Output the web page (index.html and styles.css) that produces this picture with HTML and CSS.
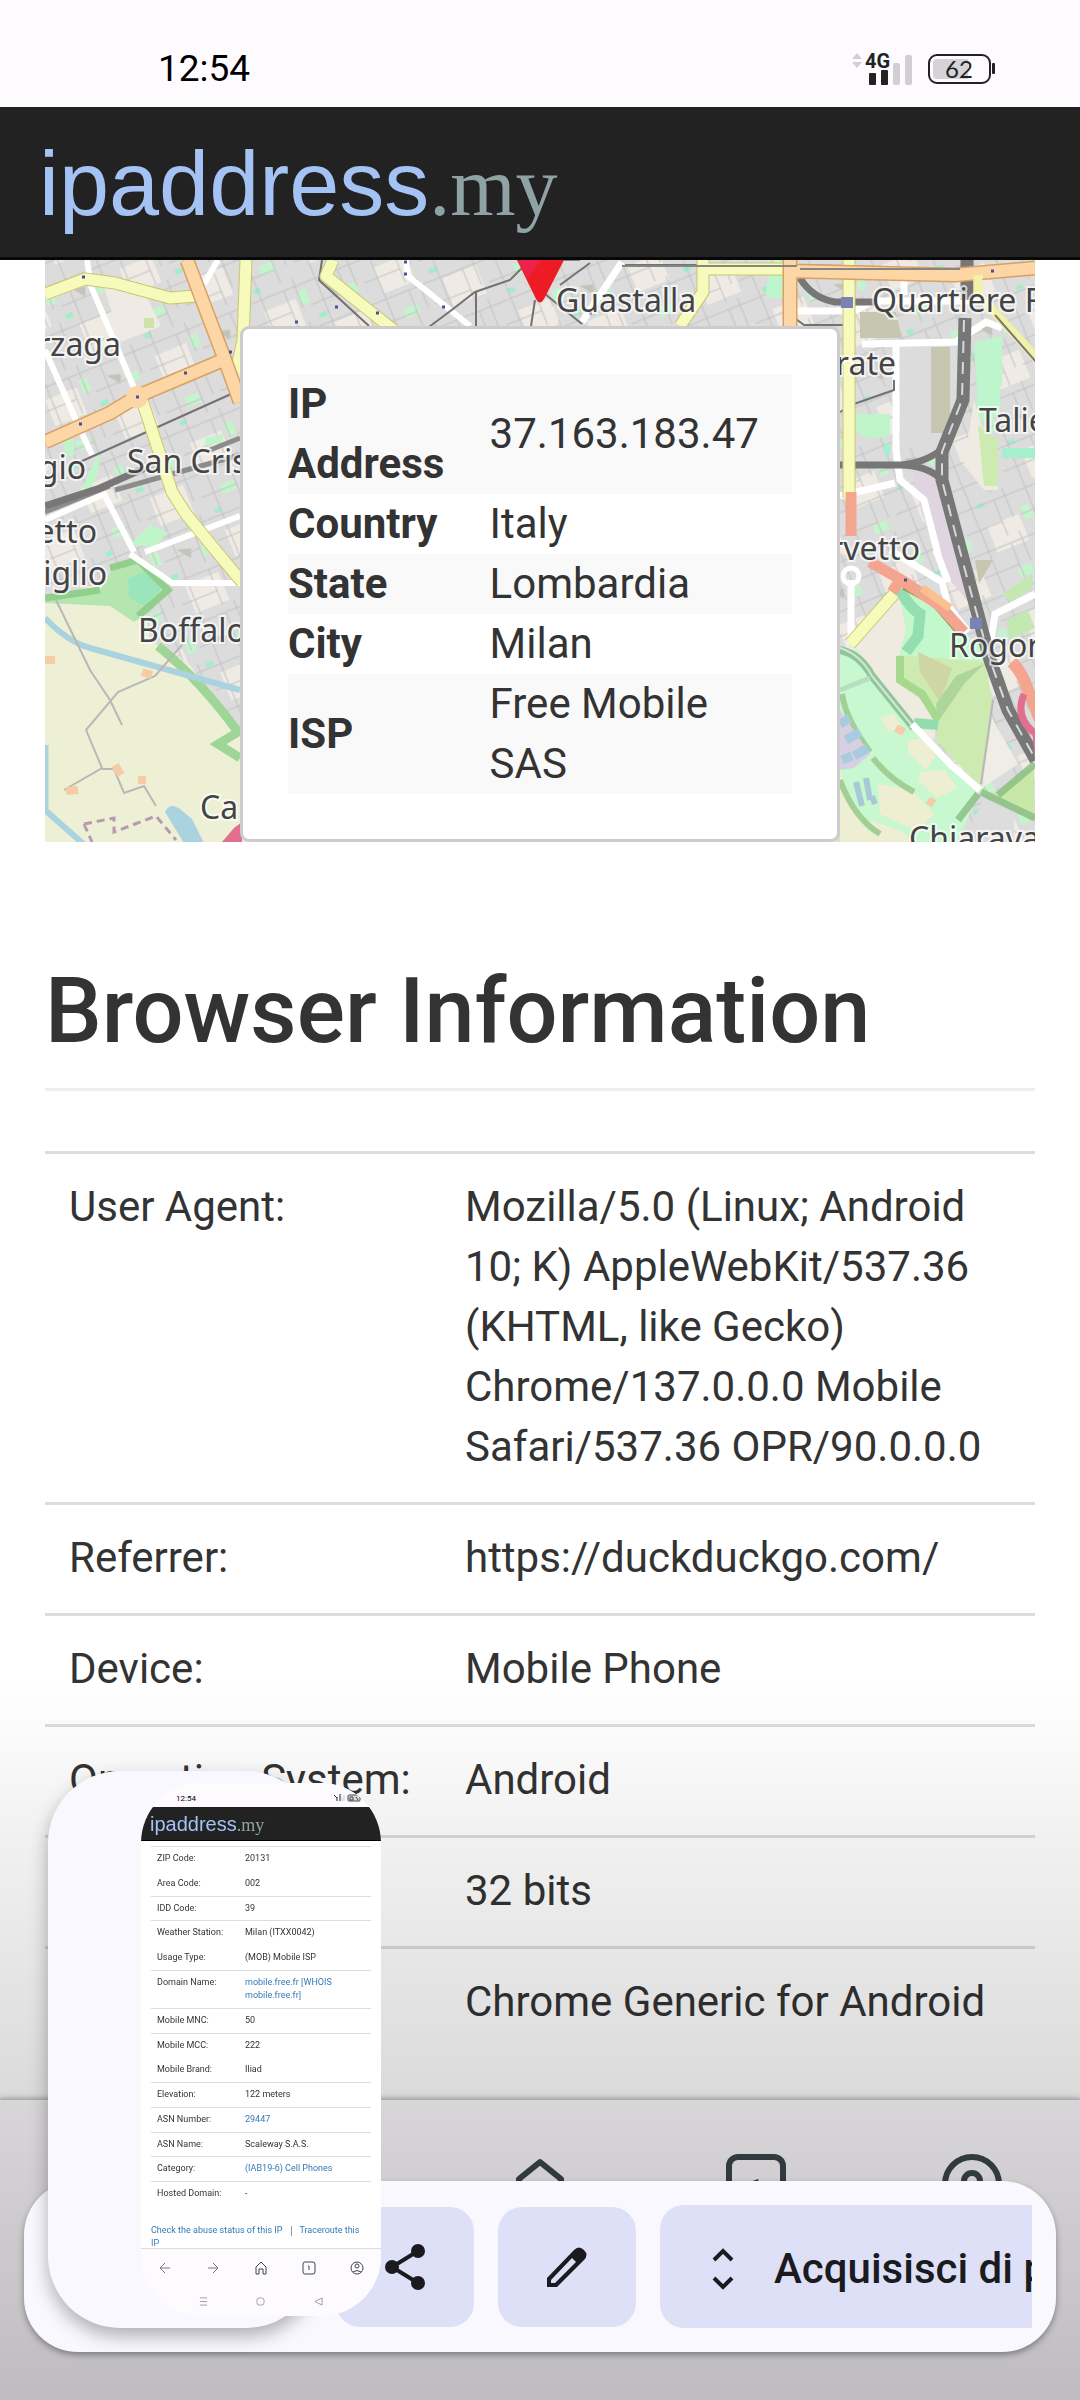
FILE: index.html
```html
<!DOCTYPE html>
<html lang="en">
<head>
    <meta charset="utf-8">
    <meta name="viewport" content="width=device-width">
    <title>ipaddress.my</title>
    <link rel="stylesheet" href="styles.css">
</head>
<body>
    <div class="status">
        <span class="clock">12:54</span>
        <svg class="signal" width="64" height="36" viewBox="850 49 64 36">
            <path d="M852 57l5-6 5 6zM852 60l5 6 5-6z" fill="#d2cfd3"/>
            <text x="865" y="66" font-size="20" font-weight="700" fill="#222">4G</text>
            <rect x="869" y="71" width="7" height="12" rx="1" fill="#222"/>
            <rect x="881" y="68" width="7" height="15" rx="1" fill="#222"/>
            <rect x="893" y="61" width="7" height="22" rx="2" fill="#d2cfd3"/>
            <rect x="905" y="53" width="7" height="30" rx="2" fill="#d2cfd3"/>
        </svg>
        <svg class="battery" width="70" height="32" viewBox="927 52 70 32">
            <rect x="929" y="54" width="61" height="28" rx="8" fill="none" stroke="#222" stroke-width="2"/>
            <path d="M937 58h31v20h-31q-4 0-4-4v-12q0-4 4-4z" fill="#d5d3d7"/>
            <rect x="992" y="62" width="3" height="11" rx="1" fill="#222"/>
            <text x="959" y="77" font-size="24" text-anchor="middle" font-family="Lato, sans-serif" fill="#222">62</text>
        </svg>
    </div>
    <header class="header">
        <a class="logo" href="#">ipaddress<span>.my</span></a>
    </header>
    <main class="container">
        <div class="map">
            <svg class="tiles" viewBox="45 260 990 582" preserveAspectRatio="xMidYMid slice">
                <defs>
                    <pattern id="streets" width="58" height="46" patternUnits="userSpaceOnUse" patternTransform="rotate(-22)">
                        <path d="M0 8H58M0 31H38M14 0V46M38 8V46M50 0V31" stroke="#c2c2c2" stroke-width="1" fill="none"/>
                    </pattern>
                    <pattern id="blocks" width="118" height="94" patternUnits="userSpaceOnUse" patternTransform="rotate(-22)">
                        <path d="M10 12h34v28h-34zM70 48h36v30h-36z" fill="#efebe4"/>
                        <path d="M48 6h9v14h-9zM22 62h15v10h-15zM98 18h8v10h-8z" fill="#c4f3cc"/>
                        <path d="M60 34h8v5h-8zM8 82h7v5h-7z" fill="#a5ecc8"/>
                        <path d="M76 12l14 4-4 9z" fill="#c4c3ba"/>
                    </pattern>
                </defs>
                <rect x="45" y="260" width="990" height="582" fill="#dcdcdc"/>
                <rect x="45" y="260" width="990" height="582" fill="url(#blocks)"/>
                <rect x="45" y="260" width="990" height="582" fill="url(#streets)"/>

                <!-- parks and fields, west -->
                <path d="M45 600L110 580 145 610 150 640 190 665 240 735V842H45z" fill="#edf0d5"/>
                <path d="M45 597L100 590 112 570 140 560 170 590 150 612 134 622 110 606 45 603z" fill="#b5e6b0"/>
                <path d="M128 578l22-8 12 18-18 18-15-8z" fill="#9be5bd"/>
                <path d="M45 598L100 590M110 568L138 560 168 590 138 616" stroke="#92cf8c" stroke-width="7" fill="none"/>
                <path d="M158 646Q200 680 238 732L218 744 240 758" stroke="#9fd597" stroke-width="9" fill="none"/>
                <path d="M103 284l18 58 40-16-20-40z" fill="#efebe4"/>
                <path d="M62 438l12 2v18l-8-4zM82 488l18-38 -2 24-8 16zM130 545l20-20 18 8-14 14zM205 438l18-4v8l-18 4z" fill="#bff5c9"/>
                <path d="M144 318h10v10h-10z" fill="#cde2a6"/>

                <!-- parks, north east -->
                <path d="M768 272h20v26h-22z" fill="#bff5cc"/>
                <path d="M860 312h36l6 26h-42z" fill="#c7c7b1"/>
                <path d="M900 345h60v55l-12 40-18 14-30-10z" fill="#dcdcdc"/>
                <path d="M931 347h19v86h-19z" fill="#c7c7b1"/>
                <path d="M856 414h34v20q-16 9-34-2z" fill="#bff5c9"/>
                <path d="M974 342l28-6v50l-24 22zM976 400l24-16v30l-20 8z" fill="#bff5cc"/>
                <path d="M974 400l10 34 14 6v50h-14l-20-25z" fill="#efebe3"/>
                <path d="M978 425l20 15v46h-14z" fill="#cdebb0"/>
                <path d="M1002 448h33v10h-33zM884 443h6v12h-6z" fill="#a5efcf"/>
                <path d="M912 470l24 4 14 40 20 90-20-24-28-66z" fill="#dfd4e0"/>

                <!-- parks, south east -->
                <path d="M840 650L858 650 900 712 980 788 958 842H840z" fill="#c7f8cf"/>
                <path d="M856 648L897 590 930 600 905 640 900 682 938 715 934 740 908 724z" fill="#efebe0"/>
                <path d="M898 588L918 590 960 630 985 650 985 668 898 660 906 630z" fill="#c2f8cb"/>
                <path d="M898 655L985 662 992 700 981 788 936 740 938 712 897 682z" fill="#cdebb0"/>
                <path d="M918 652l34 16-12 34-20-30z" fill="#d0d5a5"/>
                <path d="M984 664L964 684 938 722 936 704 956 676z" fill="#add59c"/>
                <path d="M900 656V680L922 694 938 720" stroke="#a6d98e" stroke-width="8" fill="none"/>
                <path d="M900 590q10 18 20 24l-2 22-12 16" stroke="#93dfb0" stroke-width="11" fill="none"/>
                <path d="M914 723l24 2" stroke="#93dcae" stroke-width="10"/>
                <path d="M992 718l26 46-36 24z" fill="#f0ede6"/>
                <path d="M1034 765v56l-42-26z" fill="#c8e8a8"/>
                <path d="M984 798l30 12v32h-50z" fill="#ddd"/>
                <path d="M908 740l14-2 14 18-10 14-18-18zM920 772l25-2 12 18-20 10-18-16zM878 784l34 6 22 24-16 18-38-18zM870 820l34 12 8 10h-42zM840 770l14 36 20 36h-34zM880 718l14-4 8 14-14 4z" fill="#edeed2"/>
                <path d="M842 694Q846 720 870 752M873 758Q888 778 914 792M840 780Q854 818 880 834" stroke="#a3cf94" stroke-width="6" fill="none"/>
                <path d="M840 710l30 44-16 14-14 2z" fill="#d9cfe3"/>
                <path d="M840 724l10-6M846 740l14-8M854 756l14-8M842 760l10-4" stroke="#a9cbe0" stroke-width="9"/>
                <path d="M856 782l6 24M866 778l4 22M872 796l3 8" stroke="#a9c8d8" stroke-width="6"/>
                <path d="M1002 594l30-20v14l-20 14zM1006 620l22-10 7 18-25 12z" fill="#c4e8b1"/>
                <path d="M975 560h18l-14 24z" fill="#c7c7b1"/>

                <!-- water -->
                <path d="M45 618Q68 642 90 648L165 669 240 690M45 810L88 848" stroke="#aad3df" stroke-width="6" fill="none"/>
                <path d="M45 745V812" stroke="#aad3df" stroke-width="7"/>
                <path d="M165 812q5-10 15-3l12 10 12 24h-20z" fill="#aad3df"/>
                <path d="M234 828l8-6v20h-20z" fill="#e0708e"/>

                <!-- paths -->
                <path d="M56 600L90 670 110 700 122 725M182 645L155 676 118 692 86 730 102 768 64 790M102 769h12l10 24 20-7 12 20M993 700l-12 84" stroke="#bcb6b8" stroke-width="2" fill="none"/>
                <path d="M45 660h10M142 672l10 3M66 791l12-1M115 765l6 10M138 780h8M896 728l8 4M928 800l6 4" stroke="#f7cba5" stroke-width="8"/>
                <path d="M84 824l30-6v14l42-16 20 24M84 824l8 18" stroke="#b79ab2" stroke-width="3" stroke-dasharray="8 5" fill="none"/>

                <!-- white streets -->
                <path d="M87 260L91 286 134 388M45 350L78 425 92 455M45 520L104 494 134 552M218 260l-14 24M145 552l95-36M130 554l42 29h68M406 260l2 16 62 50" stroke="#fff" stroke-width="6" fill="none"/>
                <path d="M622 262L582 322M796 311h58l20-10h110M862 344l94-2 30-20 16 6M896 342V450l4 30 24 20 14 54M904 270v25M840 496l55-13M851 580v64M890 550l52 32 6 24 20 26M1035 594l-40 20-4 26M936 550l12 32" stroke="#fff" stroke-width="7" fill="none"/>
                <circle cx="851" cy="576" r="8" fill="none" stroke="#fff" stroke-width="5"/>

                <!-- railways -->
                <path d="M80 462L240 390M322 260l-3 20 50 46M525 265l-15 15-35 12-22 17-24 18M476 292v34M535 300l-4 26M540 290l42 34M560 285l30-22M625 265h180l160 5M707 262v30l-24 30M792 270v46l12 9h46v14M840 412l14-8 40-14v-10" stroke="#727272" stroke-width="2" fill="none"/>
                <path d="M45 512L110 486M115 490L240 455M210 450L240 438" stroke="#8c8c8c" stroke-width="5" fill="none"/>
                <path d="M45 506L100 488 145 468M800 278q12 20 35 24h40M840 465h55q25 0 45-14M900 465q25 0 40 13" stroke="#777" stroke-width="7" fill="none"/>
                <path d="M967 260V300M965 318L963 400 942 452 942 480 958 540 974 600 990 660 1008 710 1036 760" stroke="#777" stroke-width="13" fill="none"/>
                <path d="M964 320L962 400 942 452 942 480 957 540 973 600 990 660 1008 710 1036 760" stroke="#d8d8d8" stroke-width="2" stroke-dasharray="12 9" fill="none"/>

                <!-- main roads -->
                <g fill="none" stroke-linejoin="round">
                    <path d="M45 294L85 279 115 283 170 298 196 296M246 260L243 340 236 372M142 400L160 455 172 492 186 514 212 546 242 582M333 260L326 276 396 332M703 260V292L680 326M705 269H790M849 260V498M894 594L850 644" stroke="#c9c66f" stroke-width="13"/>
                    <path d="M45 294L85 279 115 283 170 298 196 296M246 260L243 340 236 372M142 400L160 455 172 492 186 514 212 546 242 582M333 260L326 276 396 332M703 260V292L680 326M705 269H790M849 260V498M894 594L850 644" stroke="#f6fabb" stroke-width="11"/>
                    <path d="M187 260L225 360 240 402M45 442L110 413 138 396 228 358M790 260V326M790 271L955 275 1035 268" stroke="#d9a066" stroke-width="15"/>
                    <path d="M187 260L225 360 240 402M45 442L110 413 138 396 228 358M790 260V326M790 271L955 275 1035 268" stroke="#fcd6a4" stroke-width="12"/>
                    <path d="M978 275V294L1040 362" stroke="#f1f2a8" stroke-width="9"/>
                    <path d="M995 315l42 48" stroke="#777" stroke-width="2"/>
                    <path d="M904 586L934 602 958 630" stroke="#a99860" stroke-width="8"/>
                    <path d="M851 492V536M870 562L905 582 940 606 964 632M899 582L892 592" stroke="#f4a58f" stroke-width="11"/>
                    <path d="M922 588L950 608" stroke="#fbc08d" stroke-width="8"/>
                    <path d="M1012 662Q1022 672 1028 690L1040 720" stroke="#f4a58f" stroke-width="12"/>
                    <path d="M1024 694Q1014 718 1036 734L1040 780" stroke="#e0708e" stroke-width="7"/>
                    <path d="M981 792L1035 818M998 795L1035 764M978 794L958 820" stroke="#86bd80" stroke-width="7" opacity=".8"/>
                    <path d="M840 650Q860 654 872 676L914 728" stroke="#8fc79a" stroke-width="8"/>
                    <path d="M840 648Q860 654 872 676L914 728" stroke="#d5e5d5" stroke-width="2"/>
                    <path d="M840 690L870 678" stroke="#b5dfc0" stroke-width="5"/>
                    <path d="M912 724L950 764 980 790" stroke="#fff" stroke-width="7"/>
                    <path d="M550 260h30M622 266h175M800 269h160" stroke="#858585" stroke-width="2"/>
                </g>
                <circle cx="137" cy="397" r="11" fill="#fcd6a4"/>
                <path d="M841 297h12v11h-12zM970 618h12v11h-12z" fill="#7a81b5"/>
                <path d="M82 277h3M136 397h3M184 373h3M79 424h3M229 352h3M295 322h3M335 307h3M376 313h3M442 307h3M404 274h3M404 262h3M589 313h3M991 271h3M904 580h3" stroke="#4c4d9c" stroke-width="3"/>

                <g class="places">
                    <text x="121" y="356" text-anchor="end">rzaga</text>
                    <text x="127" y="473">San Cris</text>
                    <text x="86" y="479" text-anchor="end">gio</text>
                    <text x="97" y="543" text-anchor="end">etto</text>
                    <text x="107" y="585" text-anchor="end">iglio</text>
                    <text x="138" y="642">Boffalo</text>
                    <text x="200" y="819">Ca</text>
                    <text x="556" y="312">Guastalla</text>
                    <text x="872" y="312">Quartiere F</text>
                    <text x="896" y="375" text-anchor="end">rate</text>
                    <text x="979" y="432">Talie</text>
                    <text x="920" y="560" text-anchor="end">rvetto</text>
                    <text x="949" y="657">Rogor</text>
                    <text x="909" y="850">Chiarava</text>
                </g>
                <path d="M517 260L536 299Q540 306 544 299L564 260z" fill="#ed1c24"/>
                <path d="M517 260h24l-13 18z" fill="#ed2248"/>
            </svg>
            <div class="popup">
                <table class="ip">
                    <tr><th scope="row">IP Address</th><td>37.163.183.47</td></tr>
                    <tr><th scope="row">Country</th><td>Italy</td></tr>
                    <tr><th scope="row">State</th><td>Lombardia</td></tr>
                    <tr><th scope="row">City</th><td>Milan</td></tr>
                    <tr><th scope="row">ISP</th><td>Free Mobile SAS</td></tr>
                </table>
            </div>
        </div>
        <h2>Browser Information</h2>
        <table class="info">
            <tr><td>User Agent:</td><td>Mozilla/5.0 (Linux; Android 10; K) AppleWebKit/537.36 (KHTML, like Gecko) Chrome/137.0.0.0 Mobile Safari/537.36 OPR/90.0.0.0</td></tr>
            <tr><td>Referrer:</td><td>https://duckduckgo.com/</td></tr>
            <tr><td>Device:</td><td>Mobile Phone</td></tr>
            <tr><td>Operating System:</td><td>Android</td></tr>
            <tr><td></td><td>32 bits</td></tr>
            <tr><td></td><td>Chrome Generic for Android</td></tr>
        </table>
    </main>

    <nav class="browserbar">
        <a href="#" aria-label="Home">
            <svg width="60" height="60" viewBox="0 0 60 60"><path d="M9 55V25L30 8 51 25V55H37V36H23V55z"/></svg>
        </a>
        <a href="#" aria-label="Tabs">
            <svg width="60" height="60" viewBox="0 0 60 60"><rect x="3" y="3" width="54" height="54" rx="9"/><text x="30" y="44" text-anchor="middle">1</text></svg>
        </a>
        <a href="#" aria-label="Profile">
            <svg width="60" height="60" viewBox="0 0 60 60"><circle cx="30" cy="30" r="27"/><circle cx="30" cy="27" r="8"/><path d="M12 48q18-16 36 0"/></svg>
        </a>
    </nav>
    <div class="shade"></div>

    <div class="toolbar">
        <div class="actions">
            <button type="button" class="action" aria-label="Share">
                <svg width="42" height="42" viewBox="0 0 42 42"><path d="M34 5L8 21 34 37" fill="none" stroke="#1b1b1f" stroke-width="4"/><circle cx="34" cy="5" r="7"/><circle cx="8" cy="21" r="7"/><circle cx="34" cy="37" r="7"/></svg>
            </button>
            <button type="button" class="action" aria-label="Edit">
                <svg width="42" height="42" viewBox="0 0 42 42"><path d="M1 32L28 4Q33-1 38 4T38 14L11 41H1zM5 34V37H9L30 16 26 12z" fill-rule="evenodd"/></svg>
            </button>
            <button type="button" class="action capture">
                <svg width="22" height="42" viewBox="0 0 22 42"><path d="M2 12L11 3 20 12M2 30L11 39 20 30" fill="none" stroke="#1b1b1f" stroke-width="4"/></svg>
                Acquisisci di più
            </button>
        </div>
    </div>

    <div class="panel"></div>
    <div class="thumb">
        <div class="thumb-status">
            <span>12:54</span>
            <svg width="32" height="8" viewBox="0 0 32 8"><path d="M3 1l3 3M6 3v4M9 0v7" stroke="#222" stroke-width="1"/><path d="M11 3v4M13 1v6" stroke="#ccc"/><rect x="17" y="1" width="12" height="6" rx="1" fill="#ddd" stroke="#444"/><path d="M19 3h3v3h-3zM25 3l2 3M31 3v2" stroke="#444" fill="none"/></svg>
        </div>
        <div class="thumb-header">ipaddress<span>.my</span></div>
        <table>
            <tr><td>ZIP Code:</td><td>20131</td></tr>
            <tr class="plain"><td>Area Code:</td><td>002</td></tr>
            <tr><td>IDD Code:</td><td>39</td></tr>
            <tr><td>Weather Station:</td><td>Milan (ITXX0042)</td></tr>
            <tr class="plain"><td>Usage Type:</td><td>(MOB) Mobile ISP</td></tr>
            <tr><td>Domain Name:</td><td><a href="#">mobile.free.fr [WHOIS mobile.free.fr]</a></td></tr>
            <tr><td>Mobile MNC:</td><td>50</td></tr>
            <tr><td>Mobile MCC:</td><td>222</td></tr>
            <tr class="plain"><td>Mobile Brand:</td><td>Iliad</td></tr>
            <tr><td>Elevation:</td><td>122 meters</td></tr>
            <tr><td>ASN Number:</td><td><a href="#">29447</a></td></tr>
            <tr><td>ASN Name:</td><td>Scaleway S.A.S.</td></tr>
            <tr><td>Category:</td><td><a href="#">(IAB19-6) Cell Phones</a></td></tr>
            <tr><td>Hosted Domain:</td><td>-</td></tr>
        </table>
        <p><a href="#">Check the abuse status of this IP</a><i></i><a href="#">Traceroute this IP</a></p>
        <div class="thumb-nav">
            <svg viewBox="0 0 14 14"><path d="M12 7H2M7 2L2 7 7 12" stroke="#777"/></svg>
            <svg viewBox="0 0 14 14"><path d="M2 7H12M7 2L12 7 7 12" stroke="#777"/></svg>
            <svg viewBox="0 0 14 14"><path d="M2 13V6L7 1 12 6V13H9V8H5V13z"/></svg>
            <svg viewBox="0 0 14 14"><rect x="1" y="1" width="12" height="12" rx="2"/><path d="M6 5h1v4" stroke-width="1"/></svg>
            <svg viewBox="0 0 14 14"><circle cx="7" cy="7" r="6"/><circle cx="7" cy="5" r="2"/><path d="M3 11q4-3 8 0"/></svg>
        </div>
        <div class="thumb-keys">
            <svg viewBox="0 0 10 10"><path d="M1 1h8M1 5h8M1 9h8"/></svg>
            <svg viewBox="0 0 10 10"><rect x="1" y="1" width="8" height="8" rx="3"/></svg>
            <svg viewBox="0 0 10 10"><path d="M9 1V9L1 5z"/></svg>
        </div>
    </div>
</body>
</html>
```
FILE: styles.css
```css
* {
    box-sizing: border-box;
}
body {
    margin: 0;
    min-height: 100vh;
    background-color: #fff;
    color: #333;
    font-family: Roboto, "Liberation Sans", sans-serif;
    font-size: 42px;
    line-height: 60px;
}
a {
    color: #337ab7;
    text-decoration: none;
}
table {
    width: 100%;
    border-collapse: collapse;
    table-layout: fixed;
}
svg {
    display: block;
    overflow: visible;
}
.status {
    display: flex;
    align-items: center;
    height: 107px;
    padding: 31px 83px 0 158px;
    background-color: #fefbff;
}
.clock {
    margin-right: auto;
    color: #000;
    font-size: 37px;
    line-height: 40px;
}
.signal {
    margin-right: 13px;
}
.header {
    height: 153px;
    padding-left: 45px;
    background-color: #222;
    border-bottom: 3px solid #080808;
}
.logo {
    display: block;
    width: max-content;
    height: 150px;
    overflow: hidden;
    color: #a4c2f4;
    font: 90px/154px "Liberation Sans", Arial, sans-serif;
    text-indent: -6px;
}
.logo span {
    color: #8fa3a5;
    font-family: "Liberation Serif", serif;
    font-size: 84px;
}
.container {
    padding: 0 45px;
}

/* map */
.map {
    position: relative;
    padding-top: 66px;
    overflow: hidden;
}
.tiles {
    position: absolute;
    top: 0;
    left: 0;
    width: 100%;
    height: 100%;
}
.places {
    fill: #444;
    stroke: #fff;
    stroke-width: 4px;
    stroke-opacity: .7;
    paint-order: stroke;
    font: 32px "Noto Sans", sans-serif;
}
.popup {
    position: relative;
    width: 600px;
    max-width: 100%;
    margin: 0 auto;
    padding: 45px;
    background-color: #fff;
    border: 3px solid #ccc;
    border-radius: 9px;
}
.ip th, .ip td {
    padding: 0;
    text-align: left;
}
.ip th {
    width: 40%;
    padding-right: 30px;
}
.ip tr:nth-child(odd) {
    background-color: #f9f9f9;
}

/* browser information */
h2 {
    margin: 120px 0 60px;
    padding-bottom: 27px;
    border-bottom: 3px solid #eee;
    font-size: 90px;
    font-weight: 500;
    line-height: 99px;
}
.info td {
    padding: 23px 24px 25px;
    border-top: 3px solid #ddd;
    vertical-align: top;
}
.info td:first-child {
    width: 40%;
}
.info tr {
    height: 111px;
}

/* browser bar and dimming */
.browserbar {
    position: fixed;
    right: 0;
    bottom: 0;
    left: 0;
    display: grid;
    grid-template-columns: repeat(5, 1fr);
    height: 301px;
    padding-top: 54px;
    background-color: #fefbff;
    border-top: 1px solid #ccc;
    box-shadow: 0 0 6px rgba(0, 0, 0, .4);
}
.browserbar a {
    justify-self: center;
}
.browserbar a:first-child {
    grid-column: 3;
}
.browserbar svg {
    fill: none;
    stroke: #3c474b;
    stroke-width: 6px;
    stroke-linejoin: round;
}
.browserbar text {
    fill: #3c474b;
    stroke: none;
    font-size: 26px;
    font-weight: 500;
}
.shade {
    position: fixed;
    right: 0;
    bottom: 0;
    left: 0;
    height: 720px;
    background: linear-gradient(rgba(0, 0, 0, 0), rgba(0, 0, 0, .25));
}

/* screenshot toolbar */
.toolbar {
    position: fixed;
    right: 24px;
    bottom: 48px;
    left: 24px;
    height: 171px;
    padding: 24px 24px 24px 312px;
    background-color: #faf8ff;
    border-radius: 54px;
    box-shadow: 0 3px 6px rgba(0, 0, 0, .35);
}
.actions {
    display: flex;
    align-items: center;
    gap: 24px;
    overflow: hidden;
}
.action {
    display: flex;
    flex: none;
    align-items: center;
    justify-content: center;
    width: 138px;
    height: 120px;
    padding: 0;
    border: none;
    border-radius: 24px;
    background-color: #dee0f8;
    color: #1b1b1f;
    fill: #1b1b1f;
}
.capture {
    width: max-content;
    height: 123px;
    padding: 4px 48px 0 52px;
    gap: 40px;
    font: 500 42px/60px Roboto, sans-serif;
}
.panel {
    position: fixed;
    bottom: 72px;
    left: 48px;
    width: 270px;
    height: 557px;
    border-radius: 72px;
    background-color: #faf8ff;
    box-shadow: 0 8px 18px rgba(0, 0, 0, .3);
}

/* thumbnail of the previous shot */
.thumb {
    position: fixed;
    bottom: 84px;
    left: 141px;
    display: flex;
    flex-direction: column;
    width: 240px;
    height: 533px;
    overflow: hidden;
    border-radius: 60px;
    background-color: #fff;
    font-size: 9px;
    line-height: 13px;
}
.thumb-status {
    display: flex;
    justify-content: space-between;
    height: 24px;
    padding: 9px 18px 0 35px;
    background-color: #fefbff;
    color: #000;
    font-size: 8px;
}
.thumb-status svg {
    margin-top: 2px;
}
.thumb-header {
    height: 34px;
    padding-left: 9px;
    background-color: #222;
    border-bottom: 1px solid #000;
    color: #a4c2f4;
    font: 20px/34px "Liberation Sans", Arial, sans-serif;
}
.thumb-header span {
    color: #8fa3a5;
    font-family: "Liberation Serif", serif;
    font-size: 18px;
}
.thumb table {
    width: 220px;
    height: 360px;
    margin: 5px 10px 0;
}
.thumb td {
    padding: 5px 6px;
    border-top: 1px solid #ddd;
    vertical-align: top;
}
.thumb td:first-child {
    width: 40%;
}
.thumb .plain td {
    border-top-color: #fff;
}
.thumb td + td {
    padding-right: 20px;
}
.thumb p {
    flex: 1;
    margin: 0;
    padding: 18px 14px 0 10px;
    overflow: hidden;
}
.thumb p i {
    display: inline-block;
    width: 1px;
    height: 10px;
    margin: 0 7px 0 9px;
    background-color: #999;
    vertical-align: middle;
}
.thumb-nav, .thumb-keys {
    display: flex;
    justify-content: space-around;
    align-items: center;
    height: 38px;
    background-color: #fefbff;
    border-top: 1px solid #ddd;
    fill: none;
    stroke: #3c474b;
}
.thumb-nav svg {
    width: 14px;
    height: 14px;
    stroke-width: 1px;
}
.thumb-keys {
    height: 30px;
    padding: 0 34px 0 34px;
    border: none;
    stroke: #999;
    stroke-width: 1px;
}
.thumb-keys svg {
    width: 9px;
    height: 9px;
}
```
